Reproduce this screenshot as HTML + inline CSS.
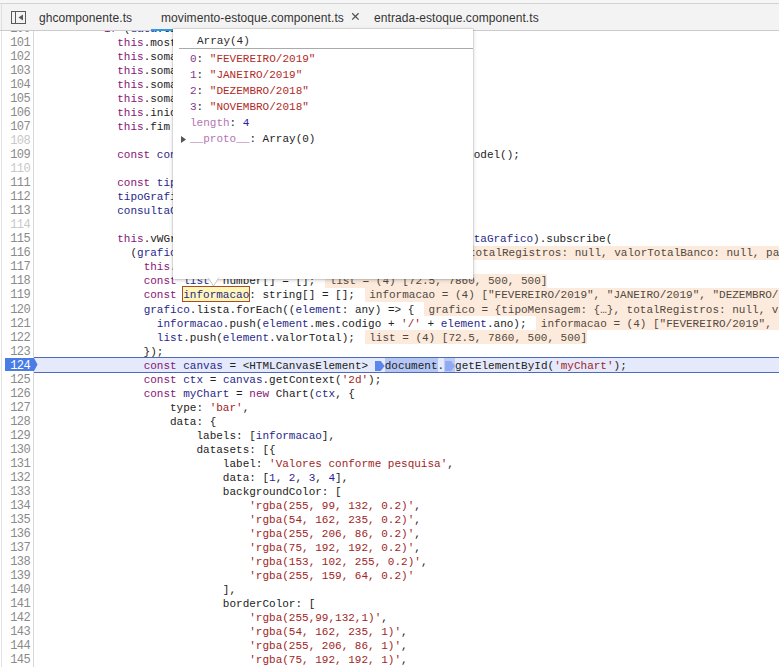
<!DOCTYPE html>
<html><head><meta charset="utf-8">
<style>
*{box-sizing:border-box}
html,body{margin:0;padding:0;width:779px;height:667px;overflow:hidden;background:#fff}
body{position:relative;font-family:"Liberation Mono",monospace;font-size:11px;color:#222}
#tabs{position:absolute;left:0;top:0;width:779px;height:31px;background:#f3f3f3;border-top:3px solid #f6f6f6;z-index:5}
#tabs:before{content:"";position:absolute;left:0;right:0;top:0;height:1px;background:#d3d3d3}
#tabs i{position:absolute;left:1px;top:0;bottom:0;width:1px;background:#dedede}
#tabs:after{content:"";position:absolute;left:0;right:0;bottom:0;height:1px;background:#cbcbcb}
.tab{position:absolute;top:8px;font-family:"Liberation Sans",sans-serif;font-size:12px;letter-spacing:0.07px;color:#333;white-space:nowrap;line-height:14px}
#gutter{position:absolute;left:1px;top:0;width:33px;height:667px;border-right:1px solid #d8d8d8;border-left:1px solid #e2e2e2;background:#fff}
.ln{position:absolute;left:0;width:30px;text-align:right;color:#8a8a8a;height:14px;line-height:14px;font-size:12px;letter-spacing:-0.6px}
.lt{color:#c8c8c8}
.cl{z-index:1;position:absolute;left:38px;height:14px;line-height:14px;white-space:pre;color:#222}
.k{color:#851676}
.s{color:#a02525}
.n{color:#2b1aa0}
.v{color:#28288a}
.iv{position:absolute;height:14px;line-height:14px;padding-left:4.4px;white-space:pre;color:#524840;background:#fcebdc}
.hl{position:absolute;left:34px;width:745px;height:16px;background:#e4e9fb;border-top:1px solid #4f6ab8;border-bottom:1px solid #4f6ab8}
.bp{position:absolute;left:0;width:40px;height:14px;z-index:2}
.bp svg{position:absolute;left:1px;top:0}
.bp span{position:absolute;left:0;top:1px;width:30px;text-align:right;color:#fff;line-height:14px;font-size:12px;letter-spacing:-0.6px}
.mk{display:inline-block;width:10px;height:10px;vertical-align:-2px;background:#5b87ec;clip-path:polygon(0 0,60% 0,100% 50%,60% 100%,0 100%)}
.mk2w{display:inline-block;width:11px;height:14px;vertical-align:top;background:#bccbf5;padding-top:3px;padding-left:1px;position:relative;top:-1px}.mk2{background:#8eaaf2;vertical-align:top}
.sel{background:#b4c6f5;display:inline-block;height:14px;vertical-align:top;position:relative;top:-1px;padding-top:1px}
#pop{position:absolute;left:173px;top:29px;width:300px;height:250px;background:#fff;z-index:10;box-shadow:0 0 0 1px rgba(0,0,0,.07),0 1px 4px rgba(0,0,0,.22)}
.pl{position:absolute;white-space:pre;height:16px;line-height:16px}
.pk{color:#85348f}
.pk2{color:#b475b4}
.ps{color:#b02a26}
</style></head><body>
<div id="gutter"></div>
<div id="code"><div class="ln" style="top:22px;padding-top:0px">100</div>
<div class="cl" style="top:22px">          <span class="k">if</span> (<span class="v">data</span>.tipoMensagem.codigo === <span class="n">0</span>) {</div>
<div class="ln" style="top:36px;padding-top:0px">101</div>
<div class="cl" style="top:36px">            <span class="k">this</span>.mostrarGrafico = true;</div>
<div class="ln" style="top:50px;padding-top:0px">102</div>
<div class="cl" style="top:50px">            <span class="k">this</span>.somaTotal = <span class="n">0</span>;</div>
<div class="ln" style="top:64px;padding-top:0px">103</div>
<div class="cl" style="top:64px">            <span class="k">this</span>.somaBanco = <span class="n">0</span>;</div>
<div class="ln" style="top:78px;padding-top:0px">104</div>
<div class="cl" style="top:78px">            <span class="k">this</span>.somaEstoque = <span class="n">0</span>;</div>
<div class="ln" style="top:92px;padding-top:0px">105</div>
<div class="cl" style="top:92px">            <span class="k">this</span>.somaGeral = <span class="n">0</span>;</div>
<div class="ln" style="top:106px;padding-top:0px">106</div>
<div class="cl" style="top:106px">            <span class="k">this</span>.inicio = <span class="n">0</span>;</div>
<div class="ln" style="top:120px;padding-top:0px">107</div>
<div class="cl" style="top:120px">            <span class="k">this</span>.fim = <span class="n">0</span>;</div>
<div class="ln lt" style="top:134px;padding-top:0px">108</div>
<div class="cl" style="top:134px"></div>
<div class="ln" style="top:148px;padding-top:0px">109</div>
<div class="cl" style="top:148px">            <span class="k">const</span> <span class="v">con</span>                                             odel();</div>
<div class="ln lt" style="top:162px;padding-top:0px">110</div>
<div class="cl" style="top:162px"></div>
<div class="ln" style="top:176px;padding-top:0px">111</div>
<div class="cl" style="top:176px">            <span class="k">const</span> <span class="v">tipoGrafico</span> = <span class="k">new</span> TipoGraficoModel();</div>
<div class="ln" style="top:190px;padding-top:0px">112</div>
<div class="cl" style="top:190px">            <span class="v">tipoGrafico</span>.codigo = <span class="n">1</span>;</div>
<div class="ln" style="top:204px;padding-top:0px">113</div>
<div class="cl" style="top:204px">            <span class="v">consultaGrafico</span>.tipoGrafico = <span class="v">tipoGrafico</span>;</div>
<div class="ln lt" style="top:218px;padding-top:0px">114</div>
<div class="cl" style="top:218px"></div>
<div class="ln" style="top:232px;padding-top:0px">115</div>
<div class="cl" style="top:232px">            <span class="k">this</span>.vWGr                                             <span class="v">taGrafico</span>).subscribe(</div>
<div class="ln" style="top:246px;padding-top:0px">116</div>
<div class="cl" style="top:246px">              (<span class="v">grafico</span>: any) =&gt; {</div>
<div class="iv" style="top:246px;padding-top:0px;left:266.6px">grafico = {tipoMensagem: {…}, totalRegistros: null, valorTotalBanco: null, pagina: 0}</div>
<div class="ln" style="top:260px;padding-top:0px">117</div>
<div class="cl" style="top:260px">                <span class="k">this</span>.graficoModel = <span class="v">grafico</span>;</div>
<div class="ln" style="top:274px;padding-top:0px">118</div>
<div class="cl" style="top:274px">                <span class="k">const</span> <span class="v">list</span>: number[] = [];</div>
<div class="iv" style="top:274px;padding-top:0px;left:325.2px">list = (4) [72.5, 7860, 500, 500]</div>
<div class="ln" style="top:288px;padding-top:0px">119</div>
<div class="cl" style="top:288px">                <span class="k">const</span> <span class="v">informacao</span>: string[] = [];</div>
<div class="iv" style="top:288px;padding-top:0px;left:364.8px">informacao = (4) ["FEVEREIRO/2019", "JANEIRO/2019", "DEZEMBRO/2018", "NOVEMBRO/2018"]</div>
<div class="ln" style="top:302px;padding-top:1px">120</div>
<div class="cl" style="top:303px">                <span class="v">grafico</span>.lista.forEach((<span class="v">element</span>: any) =&gt; {</div>
<div class="iv" style="top:302px;padding-top:1px;left:424.2px">grafico = {tipoMensagem: {…}, totalRegistros: null, valorTotalBanco: null}</div>
<div class="ln" style="top:316px;padding-top:1px">121</div>
<div class="cl" style="top:317px">                  <span class="v">informacao</span>.push(<span class="v">element</span>.mes.codigo + <span class="s">'/'</span> + <span class="v">element</span>.ano);</div>
<div class="iv" style="top:316px;padding-top:1px;left:536.4px">informacao = (4) ["FEVEREIRO/2019", "JANEIRO/2019", "DEZEMBRO/2018"]</div>
<div class="ln" style="top:330px;padding-top:1px">122</div>
<div class="cl" style="top:331px">                  <span class="v">list</span>.push(<span class="v">element</span>.valorTotal);</div>
<div class="iv" style="top:330px;padding-top:1px;left:364.8px">list = (4) [72.5, 7860, 500, 500]</div>
<div class="ln" style="top:344px;padding-top:1px">123</div>
<div class="cl" style="top:345px">                });</div>
<div class="hl" style="top:357px"></div>
<div class="bp" style="top:358px"><svg width="40" height="14" viewBox="0 0 40 14"><path d="M4 0 H33 L36.5 6.5 L33 13 H4 Z" fill="#4a7ce6"/></svg><span>124</span></div>
<div class="cl" style="top:359px">                <span class="k">const</span> <span class="v">canvas</span> = &lt;HTMLCanvasElement&gt; <span class="mk"></span><span class="sel">document</span>.<span class="mk2w"><span class="mk mk2"></span></span>getElementById(<span class="s">'myChart'</span>);</div>
<div class="ln" style="top:372px;padding-top:1px">125</div>
<div class="cl" style="top:373px">                <span class="k">const</span> <span class="v">ctx</span> = <span class="v">canvas</span>.getContext(<span class="s">'2d'</span>);</div>
<div class="ln" style="top:386px;padding-top:1px">126</div>
<div class="cl" style="top:387px">                <span class="k">const</span> <span class="v">myChart</span> = <span class="k">new</span> Chart(<span class="v">ctx</span>, {</div>
<div class="ln" style="top:400px;padding-top:1px">127</div>
<div class="cl" style="top:401px">                    type: <span class="s">'bar'</span>,</div>
<div class="ln" style="top:414px;padding-top:1px">128</div>
<div class="cl" style="top:415px">                    data: {</div>
<div class="ln" style="top:428px;padding-top:1px">129</div>
<div class="cl" style="top:429px">                        labels: [<span class="v">informacao</span>],</div>
<div class="ln" style="top:442px;padding-top:1px">130</div>
<div class="cl" style="top:443px">                        datasets: [{</div>
<div class="ln" style="top:456px;padding-top:1px">131</div>
<div class="cl" style="top:457px">                            label: <span class="s">'Valores conforme pesquisa'</span>,</div>
<div class="ln" style="top:470px;padding-top:1px">132</div>
<div class="cl" style="top:471px">                            data: [<span class="n">1</span>, <span class="n">2</span>, <span class="n">3</span>, <span class="n">4</span>],</div>
<div class="ln" style="top:484px;padding-top:1px">133</div>
<div class="cl" style="top:485px">                            backgroundColor: [</div>
<div class="ln" style="top:498px;padding-top:1px">134</div>
<div class="cl" style="top:499px">                                <span class="s">'rgba(255, 99, 132, 0.2)'</span>,</div>
<div class="ln" style="top:512px;padding-top:1px">135</div>
<div class="cl" style="top:513px">                                <span class="s">'rgba(54, 162, 235, 0.2)'</span>,</div>
<div class="ln" style="top:526px;padding-top:1px">136</div>
<div class="cl" style="top:527px">                                <span class="s">'rgba(255, 206, 86, 0.2)'</span>,</div>
<div class="ln" style="top:540px;padding-top:1px">137</div>
<div class="cl" style="top:541px">                                <span class="s">'rgba(75, 192, 192, 0.2)'</span>,</div>
<div class="ln" style="top:554px;padding-top:1px">138</div>
<div class="cl" style="top:555px">                                <span class="s">'rgba(153, 102, 255, 0.2)'</span>,</div>
<div class="ln" style="top:568px;padding-top:1px">139</div>
<div class="cl" style="top:569px">                                <span class="s">'rgba(255, 159, 64, 0.2)'</span></div>
<div class="ln" style="top:582px;padding-top:1px">140</div>
<div class="cl" style="top:583px">                            ],</div>
<div class="ln" style="top:596px;padding-top:1px">141</div>
<div class="cl" style="top:597px">                            borderColor: [</div>
<div class="ln" style="top:610px;padding-top:1px">142</div>
<div class="cl" style="top:611px">                                <span class="s">'rgba(255,99,132,1)'</span>,</div>
<div class="ln" style="top:624px;padding-top:1px">143</div>
<div class="cl" style="top:625px">                                <span class="s">'rgba(54, 162, 235, 1)'</span>,</div>
<div class="ln" style="top:638px;padding-top:1px">144</div>
<div class="cl" style="top:639px">                                <span class="s">'rgba(255, 206, 86, 1)'</span>,</div>
<div class="ln" style="top:652px;padding-top:1px">145</div>
<div class="cl" style="top:653px">                                <span class="s">'rgba(75, 192, 192, 1)'</span>,</div></div>
<div style="position:absolute;left:182px;top:286px;width:68px;height:16px;background:#fff6b8;border:1px solid #a84a2c;z-index:0"></div>
<div id="tabs"><i></i>
  <svg style="position:absolute;left:11px;top:8px" width="16" height="14" viewBox="0 0 16 14"><rect x="0.5" y="0.5" width="14" height="12" fill="none" stroke="#5a5a5a" stroke-width="1"/><line x1="4.5" y1="0.5" x2="4.5" y2="12.5" stroke="#5a5a5a"/><path d="M12 3.5 L7.5 6.5 L12 9.5 Z" fill="#5a5a5a"/></svg>
  <div class="tab" style="left:39px">ghcomponente.ts</div>
  <div style="position:absolute;left:151px;top:26px;width:210px;height:2px;background:#2d9be6;z-index:2"></div>
  <div class="tab" style="left:161px">movimento-estoque.component.ts</div>
  <svg style="position:absolute;left:351px;top:9px" width="9" height="9" viewBox="0 0 9 9"><path d="M1.2 1.2 L7.6 7.6 M7.6 1.2 L1.2 7.6" stroke="#505050" stroke-width="1.25"/></svg>
  <div class="tab" style="left:374px">entrada-estoque.component.ts</div>
</div>
<div id="pop">
  <div class="pl" style="left:24px;top:4px;color:#2a2a2a">Array(4)</div>
  <div style="position:absolute;left:6px;right:0;top:19px;height:1px;background:#aaa"></div>
  <div class="pl" style="left:17px;top:22px"><span class="pk">0</span>: <span class="ps">"FEVEREIRO/2019"</span></div>
  <div class="pl" style="left:17px;top:38px"><span class="pk">1</span>: <span class="ps">"JANEIRO/2019"</span></div>
  <div class="pl" style="left:17px;top:54px"><span class="pk">2</span>: <span class="ps">"DEZEMBRO/2018"</span></div>
  <div class="pl" style="left:17px;top:70px"><span class="pk">3</span>: <span class="ps">"NOVEMBRO/2018"</span></div>
  <div class="pl" style="left:17px;top:86px"><span class="pk2">length</span>: <span class="n">4</span></div>
  <div class="pl" style="left:17px;top:102px"><span class="pk2">__proto__</span>: Array(0)</div>
  <svg style="position:absolute;left:8px;top:107px" width="6" height="8"><path d="M0 0 L5 3.5 L0 7Z" fill="#555"/></svg>
</div>
<svg style="position:absolute;left:207px;top:277px;z-index:11" width="14" height="10" viewBox="0 0 14 10"><path d="M1 0.5 L6.5 9 L12 0.5" fill="#fff" stroke="#c8c8c8" stroke-width="1"/><rect x="1.5" y="0" width="10" height="1.5" fill="#fff"/></svg>
</body></html>
